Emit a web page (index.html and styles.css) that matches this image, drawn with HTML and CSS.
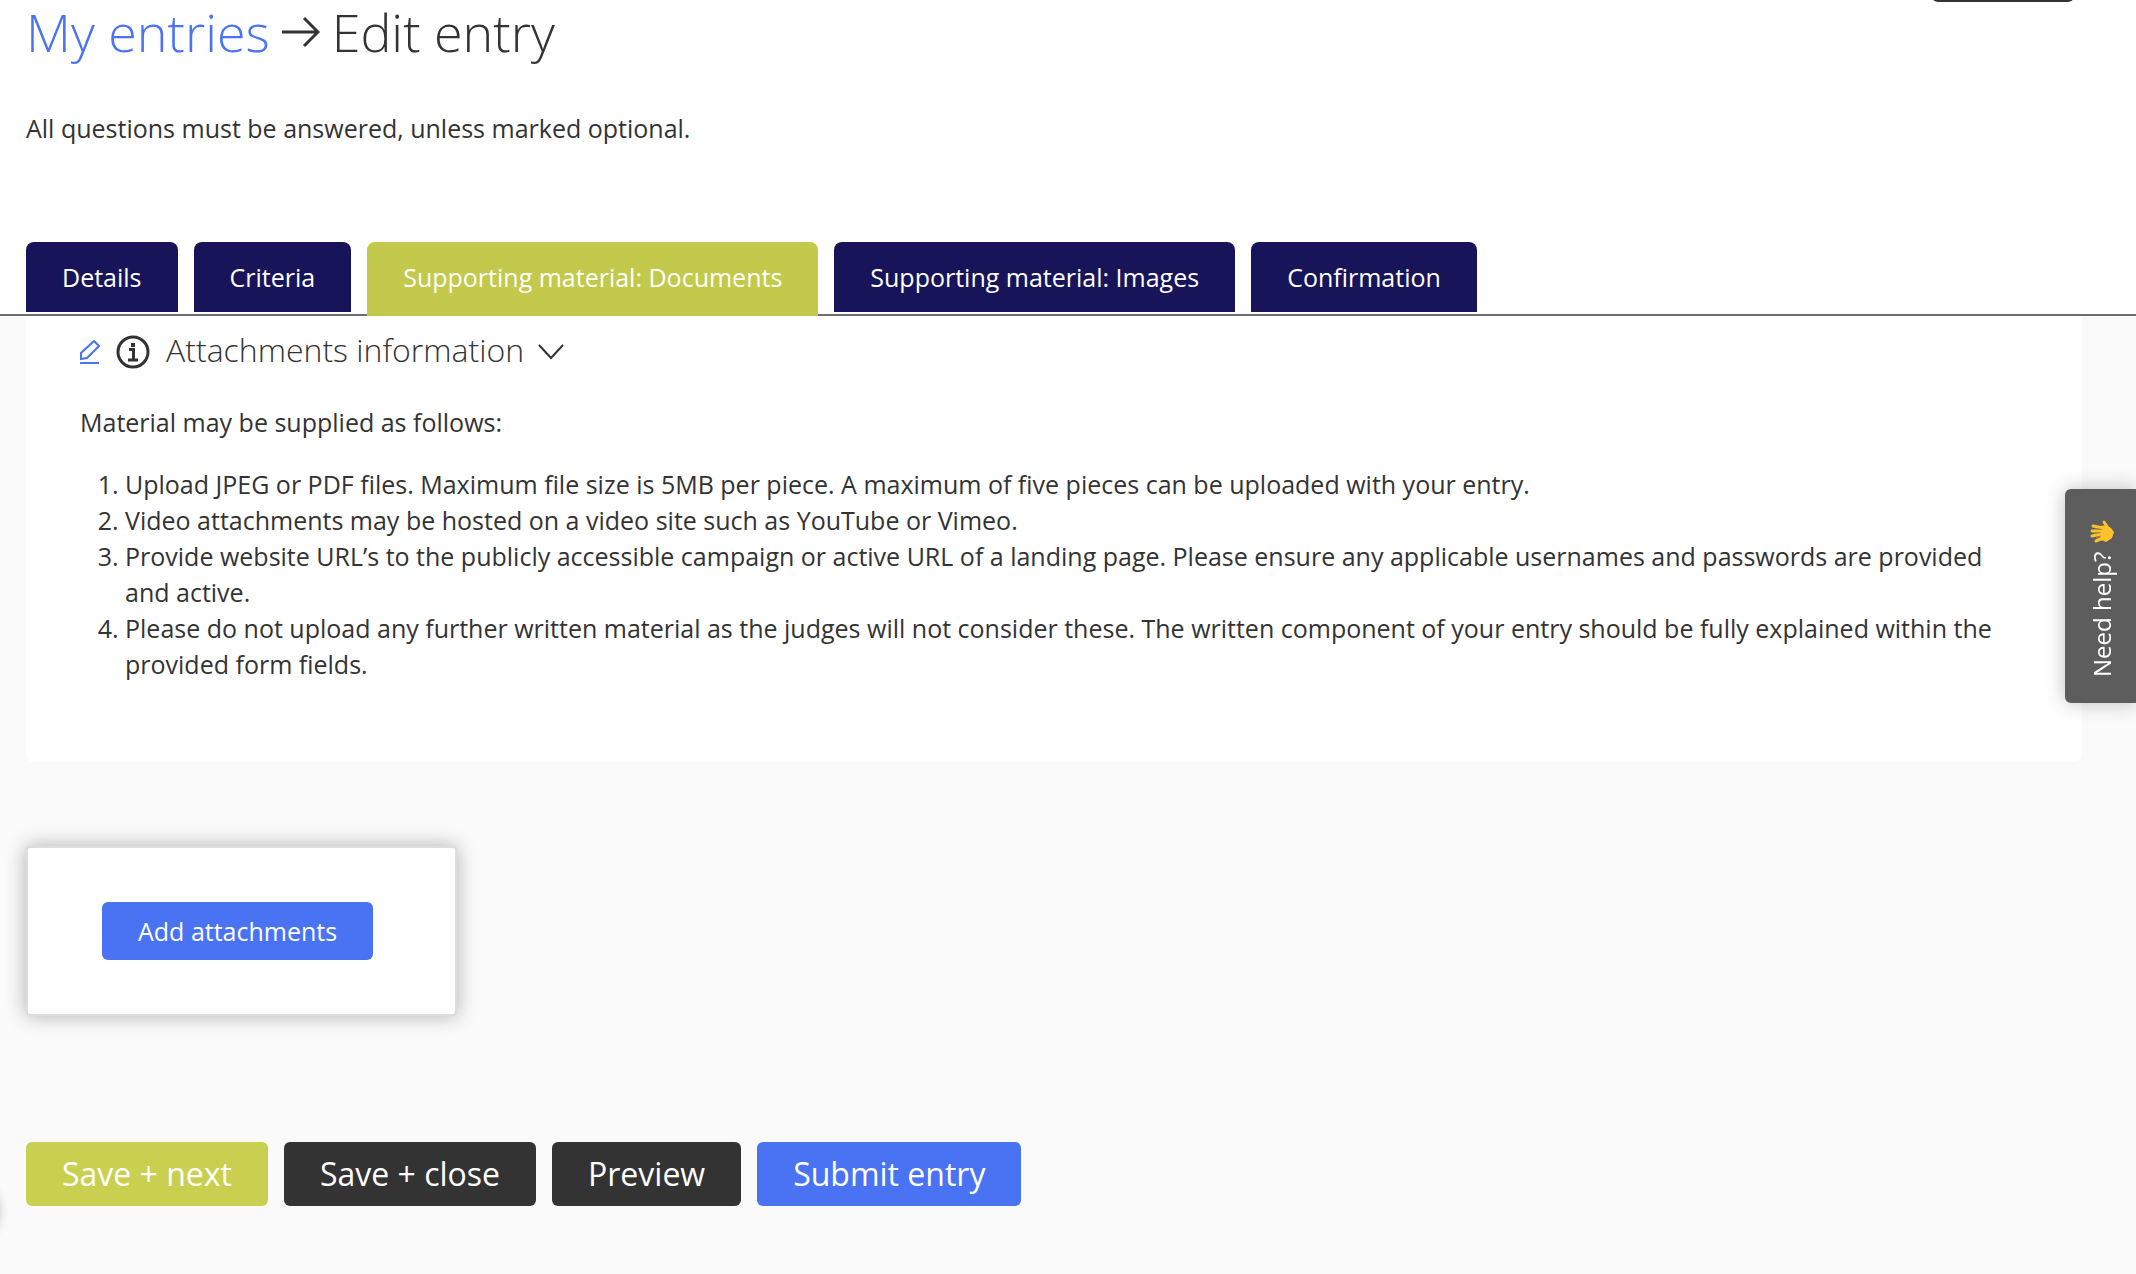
FILE: index.html
```html
<!DOCTYPE html>
<html lang="en">
<head>
<meta charset="utf-8">
<meta name="viewport" content="width=device-width, initial-scale=1">
<title>Edit entry</title>
<link rel="stylesheet" href="styles.css">
</head>
<body>
<header class="page-header">
  <div class="title-row">
    <h1 class="title">
      <a class="title-link" href="#">My entries</a>
      <svg class="title-arrow" viewBox="0 0 38 32" aria-hidden="true"><path d="M0 16h36M22 2l14 14-14 14"/></svg>
      <span>Edit entry</span>
    </h1>
    <button class="header-action" type="button" aria-label="Actions"></button>
  </div>
  <p class="intro">All questions must be answered, unless marked optional.</p>
  <nav class="tabs" aria-label="Entry sections">
    <a class="tab" href="#">Details</a>
    <a class="tab" href="#">Criteria</a>
    <a class="tab tab-active" href="#" aria-current="page">Supporting material: Documents</a>
    <a class="tab" href="#">Supporting material: Images</a>
    <a class="tab" href="#">Confirmation</a>
  </nav>
</header>

<main class="content">
  <section class="panel">
    <div class="panel-head">
      <a class="edit-link" href="#" aria-label="Edit block">
        <svg class="edit-icon" viewBox="0 0 20 24" aria-hidden="true"><path d="M1 19v-6L14 1l5 5L7 18l-6 1zM0 23h19"/></svg>
      </a>
      <svg class="info-icon" viewBox="0 0 34 34" aria-hidden="true"><circle cx="17" cy="17" r="15"/><path d="M13 14.500h4.500V25M12 25h10"/><path class="info-dot" d="M15 8h4v4h-4z"/></svg>
      <h2 class="panel-title">Attachments information</h2>
      <button class="toggle" type="button" aria-label="Collapse"><svg class="chevron" viewBox="0 0 26 16" aria-hidden="true"><path d="M1 1l12 13L25 1"/></svg></button>
    </div>
    <p class="panel-text">Material may be supplied as follows:</p>
    <ol class="rules">
      <li>Upload JPEG or PDF files. Maximum file size is 5MB per piece. A maximum of five pieces can be uploaded with your entry.</li>
      <li>Video attachments may be hosted on a video site such as YouTube or Vimeo.</li>
      <li>Provide website URL’s to the publicly accessible campaign or active URL of a landing page. Please ensure any applicable usernames and passwords are provided and active.</li>
      <li>Please do not upload any further written material as the judges will not consider these. The written component of your entry should be fully explained within the provided form fields.</li>
    </ol>
  </section>

  <section class="upload">
    <button class="btn btn-blue" type="button">Add attachments</button>
  </section>

  <div class="actions">
    <button class="btn btn-large btn-lime" type="button">Save + next</button>
    <button class="btn btn-large btn-dark" type="button">Save + close</button>
    <button class="btn btn-large btn-dark" type="button">Preview</button>
    <button class="btn btn-large btn-blue" type="button">Submit entry</button>
  </div>
</main>

<button class="help" type="button">
  <span>Need help?</span>
  <svg class="wave" viewBox="0 0 24 24" aria-hidden="true">
    <path class="wave-palm" d="M11 6l5-1 5 3 3 4-2 6-6 4-5-2-2-6z"/>
    <path class="wave-fingers" d="M13 8L3 6M12 11L2 11M12 14L2 16M13 18L6 21M18 8L14 2"/>
    <path class="wave-lines" d="M5 8.500l7 1M4 13.500l7-1M6 18l5-2"/>
  </svg>
</button>
<div class="side-handle" aria-hidden="true"></div>
</body>
</html>
```

FILE: styles.css
```css
* { box-sizing: border-box; }

body {
  margin: 0;
  min-height: 100vh;
  position: relative;
  overflow-x: hidden;
  background: #fafafa;
  color: #333;
  font-family: "Open Sans", sans-serif;
  font-size: 25px;
  line-height: 36px;
}

h1, h2, p, ol { margin: 0; }
a { text-decoration: none; }
svg { fill: none; flex: none; }

.page-header {
  background: #fff;
  border-bottom: 2px solid #6d6d6d;
}

.title-row {
  display: flex;
  justify-content: space-between;
  align-items: flex-start;
  padding: 0 62px 0 26px;
}

.title {
  display: flex;
  align-items: center;
  gap: 12px;
  font-size: 52px;
  font-weight: 300;
  line-height: 64px;
}

.title-link { color: #4a73f3; }

.title-arrow {
  width: 38px;
  height: 32px;
  stroke: #333;
  stroke-width: 3;
}

.header-action {
  width: 142px;
  height: 60px;
  margin-top: -58px;
  border: 0;
  border-radius: 6px;
  background: #333;
}

.intro { padding: 46px 26px 0; }

.tabs {
  display: flex;
  align-items: flex-start;
  gap: 16px;
  padding: 96px 26px 0;
}

.tab {
  height: 70px;
  padding: 17px 36px;
  border-radius: 8px 8px 0 0;
  background: #18145a;
  color: #fff;
  white-space: nowrap;
}

.tab-active {
  height: 74px;
  margin-bottom: -2px;
  background: #c2c94b;
}

.content { padding: 0 54px 68px 26px; }

.panel {
  padding: 16px 54px 80px;
  border-radius: 0 0 8px 8px;
  background: #fff;
}

.panel-head {
  display: flex;
  align-items: center;
  height: 40px;
}

.edit-link { display: flex; }

.edit-icon {
  width: 20px;
  height: 24px;
  stroke: #4a73f3;
  stroke-width: 2;
}

.info-icon {
  width: 34px;
  height: 34px;
  margin: 0 16px;
  stroke: #333;
  stroke-width: 3;
}

.info-dot {
  fill: #333;
  stroke: none;
}

.panel-title {
  padding-bottom: 4px;
  font-size: 32px;
  font-weight: 300;
  line-height: 36px;
}

.toggle {
  display: flex;
  margin-left: 14px;
  padding: 0;
  border: 0;
  background: none;
}

.chevron {
  width: 26px;
  height: 16px;
  stroke: #333;
  stroke-width: 2;
}

.panel-text { padding-top: 32px; }

.rules {
  margin-top: 26px;
  padding-left: 45px;
}

.upload {
  display: flex;
  width: fit-content;
  margin-top: 84px;
  padding: 54px 82px 54px 74px;
  border: 2px solid #ddd;
  border-radius: 4px;
  background: #fff;
  box-shadow: 0 0 20px rgba(0, 0, 0, 0.3);
}

.btn {
  height: 58px;
  padding: 0 36px;
  border: 0;
  border-radius: 6px;
  color: #fff;
  font: inherit;
  white-space: nowrap;
}

.btn-large {
  height: 64px;
  font-size: 32px;
}

.btn-lime { background: #c9d050; }
.btn-dark { background: #333; }
.btn-blue { background: #4a73f3; }

.actions {
  display: flex;
  flex-wrap: wrap;
  gap: 16px;
  margin-top: 126px;
}

/* Floating tab pinned to the right edge, read from bottom to top */
.help {
  position: fixed;
  top: 489px;
  right: 0;
  display: flex;
  align-items: center;
  gap: 8px;
  width: 71px;
  height: 214px;
  padding: 26px 4px 26px 0;
  border: 0;
  border-radius: 0 6px 6px 0;
  background: #5d5d5d;
  box-shadow: 0 0 20px rgba(0, 0, 0, 0.25);
  color: #fff;
  font: inherit;
  font-size: 24px;
  white-space: nowrap;
  writing-mode: vertical-rl;
  transform: rotate(180deg);
}

.wave {
  width: 24px;
  height: 24px;
  transform: rotate(180deg);
}

.wave-palm { fill: #fcc12d; }

.wave-fingers {
  stroke: #fcc12d;
  stroke-width: 3;
  stroke-linecap: round;
}

.wave-lines { stroke: #b98a35; }

/* Only the shadow of the collapsed drawer shows at the left edge */
.side-handle {
  position: fixed;
  top: 1182px;
  left: -60px;
  width: 58px;
  height: 58px;
  border-radius: 50%;
  box-shadow: 0 0 12px rgba(0, 0, 0, 0.3);
}
```
